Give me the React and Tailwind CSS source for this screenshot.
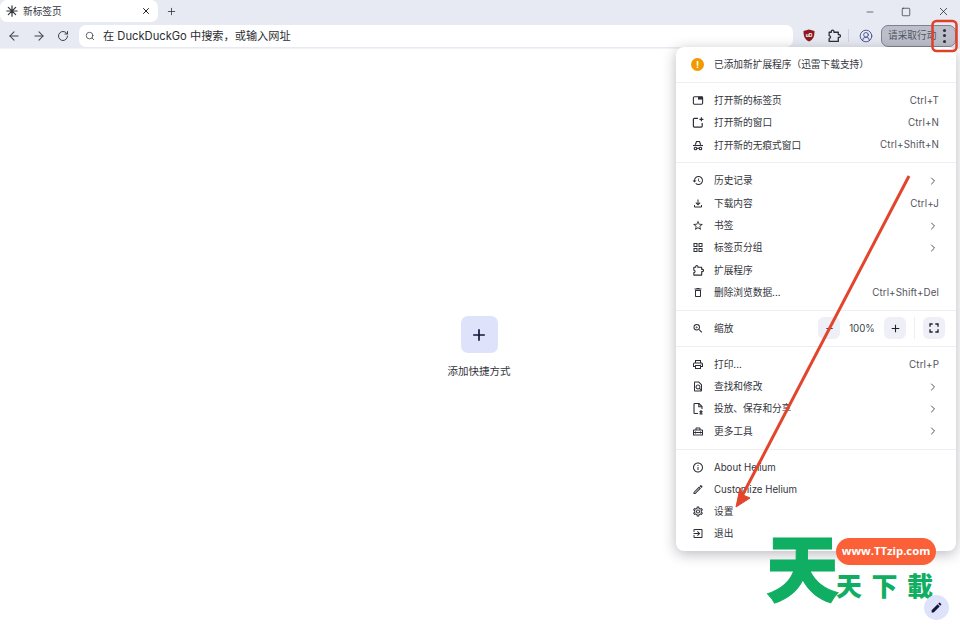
import React from "react";
import { ArrowLeft, ArrowRight, RotateCw, Search, Minus, Square, X, Plus, ChevronRight, CircleUserRound } from "lucide-react";
import {
  MdHistory, MdOutlineFileDownload, MdStarBorder, MdOutlineGridView,
  MdOutlineDelete, MdZoomIn, MdOutlinePrint, MdOutlineFindInPage, MdOutlineHomeRepairService,
  MdInfoOutline, MdOutlineEdit, MdOutlineSettings, MdOutlineExitToApp, MdFullscreen, MdEdit, MdAdd, MdRemove,
} from "react-icons/md";

const font = { fontFamily: 'Inter, "Noto Sans CJK SC", sans-serif' };

function Puzzle({ size = 13 }) {
  return (
    <svg width={size} height={size} viewBox="0 0 13 13" fill="none" stroke="currentColor" strokeWidth="1.200" strokeLinejoin="round">
      <path d="M2 3H4V2.300a1.200 1.200 0 0 1 2.400 0V3H10.500V5.300H11.300a1.200 1.200 0 0 1 0 2.400H10.500V11.500H2V8.800a1.300 1.300 0 0 0 0-2.600z" />
    </svg>
  );
}
function NewTab() {
  return (
    <svg width="13" height="13" viewBox="0 0 13 13" fill="none">
      <rect x="1.500" y="2.500" width="10" height="8" rx="1" stroke="currentColor" strokeWidth="1.200" />
      <rect x="6.500" y="2.500" width="5" height="3" fill="currentColor" />
    </svg>
  );
}
function NewWindow() {
  return (
    <svg width="13" height="13" viewBox="0 0 12 12" fill="none" stroke="currentColor" strokeWidth="1.200">
      <path d="M6 1.800H2.400a1 1 0 0 0-1 1v6.800a1 1 0 0 0 1 1h6.800a1 1 0 0 0 1-1V6.500" />
      <path d="M9.400 .8v4M7.400 2.800h4" />
    </svg>
  );
}
function Incognito() {
  return (
    <svg width="13" height="13" viewBox="0 0 12 12" fill="none" stroke="currentColor" strokeWidth="1.100">
      <path d="M3.300 5.300 4.500 2h3L8.700 5.300" />
      <path d="M1 6h10" />
      <circle cx="3.500" cy="9" r="1.300" />
      <circle cx="8.500" cy="9" r="1.300" />
      <path d="M4.800 8.800h2.400" />
    </svg>
  );
}
function FileShare() {
  return (
    <svg width="13" height="13" viewBox="0 0 12 12" fill="none" stroke="currentColor" strokeWidth="1.100">
      <path d="M6 11H2.800a.8.8 0 0 1-.8-.8V1.800a.8.8 0 0 1 .8-.8H7l3 3v2.500" />
      <path d="M6.800 1v3.200H10" />
      <path d="M9 7.500v2.500M7.500 8.800 9 10.200l1.500-1.400M7.500 11.400h3" />
    </svg>
  );
}
function TabIcon() {
  return (
    <svg width="12" height="12" viewBox="0 0 12 12" stroke="#33353c" strokeWidth="1.200" strokeLinecap="round">
      <path d="M6 .8v10.400M.8 6h10.400M2.300 2.300l7.400 7.400M9.700 2.300l-7.400 7.400" />
    </svg>
  );
}
function Row({ icon, label, right, chevron }) {
  return (
    <div className="flex h-[22.3px] items-center pl-[16px] pr-[17px] text-[9.700px] text-[#33353b]">
      <span className="flex w-[12px] justify-center text-[#2d2f36]">{icon}</span>
      <span className="ml-[10px] flex-1 whitespace-nowrap pt-[1.500px]">{label}</span>
      {right && <span className="whitespace-nowrap pt-[1.500px] text-[9.800px] tracking-[0.1px] text-[#53555d]">{right}</span>}
      {chevron && <ChevronRight size={12} strokeWidth={1.800} className="text-[#3c3f47]" />}
    </div>
  );
}
const Sep = () => <div className="h-px bg-[#eeeef2]" />;
const Group = ({ children }) => <div className="py-[6.3px]">{children}</div>;

export default function App() {
  const ic = 13;
  return (
    <div className="relative flex h-[628px] w-[960px] flex-col overflow-hidden bg-white" style={font}>
      {/* tab strip */}
      <div className="flex h-[23px] items-start bg-[#e8eaf3]">
        <div className="flex h-[22px] w-[158px] items-center rounded-[7px] bg-white pl-[6px] pr-[7px]">
          <TabIcon />
          <span className="ml-[5px] flex-1 pt-[2.500px] text-[9.700px] text-[#33353c]">新标签页</span>
          <X size={10} strokeWidth={2.400} className="text-[#202124]" />
        </div>
        <Plus size={11} strokeWidth={1.800} className="ml-[8px] mt-[6px] text-[#33353c]" />
        <div className="ml-auto mt-[5px] flex items-center text-[#202124]">
          <Minus size={10} strokeWidth={1.500} className="mr-[26px]" />
          <Square size={10} strokeWidth={1.600} className="mr-[26px]" />
          <X size={13} strokeWidth={1.400} className="mr-[10px]" />
        </div>
      </div>
      {/* toolbar */}
      <div className="flex h-[25px] items-center bg-[#e8eaf3] pr-[4px]">
        <ArrowLeft size={14} strokeWidth={1.800} className="ml-[7px] text-[#3c3f47]" />
        <ArrowRight size={14} strokeWidth={1.800} className="ml-[11px] text-[#3c3f47]" />
        <RotateCw size={12} strokeWidth={2} className="ml-[11px] text-[#3c3f47]" />
        <div className="ml-[10px] flex h-[22px] w-[714px] items-center rounded-[7px] bg-white pl-[6px]">
          <Search size={10} strokeWidth={2} className="text-[#44464e]" />
          <span className="ml-[8px] whitespace-nowrap pt-[1px] text-[11.200px] text-[#2b2d33]">在 DuckDuckGo 中搜索，或输入网址</span>
        </div>
        <svg width="12" height="13" viewBox="0 0 12 13" className="ml-[10px]">
          <path d="M6 .5 11.500 2c0 5-1 8.500-5.500 10.500C1.500 10.500.500 7 .500 2z" fill="#8c1b1f" />
          <text x="6" y="7.500" fontSize="5" fill="#fff" textAnchor="middle" fontWeight="700">uD</text>
        </svg>
        <span className="ml-[12px] text-[#2d2f36]"><Puzzle size={14} /></span>
        <div className="ml-[7px] h-[13px] w-px bg-[#cfd1da]" />
        <CircleUserRound size={14} strokeWidth={1.500} className="ml-[10px] text-[#3f4a8a]" />
        <div className="ml-[8px] flex h-[22px] w-[75px] items-center overflow-hidden rounded-[7px] border border-[#80838d] bg-[#bcbfcb] pl-[6px]">
          <span className="whitespace-nowrap pt-[1px] text-[9.700px] text-[#53555e]">请采取行动</span>
          <span className="ml-auto mr-[9px] flex flex-col gap-[2.500px]">
            <i className="block h-[3px] w-[3px] rounded-full bg-[#2d2f36]" />
            <i className="block h-[3px] w-[3px] rounded-full bg-[#2d2f36]" />
            <i className="block h-[3px] w-[3px] rounded-full bg-[#2d2f36]" />
          </span>
        </div>
      </div>
      {/* page */}
      <div className="flex flex-1 flex-col items-center border-t border-[#f1f2f6] pr-[2px] pt-[267px]">
        <div className="flex h-[37px] w-[37px] items-center justify-center rounded-[7px] bg-[#dfe2fb]">
          <MdAdd size={20} className="text-[#12163a]" />
        </div>
        <div className="mt-[11px] text-[10.500px] text-[#33353b]">添加快捷方式</div>
      </div>

      {/* menu */}
      <div className="absolute left-[676px] top-[47px] w-[280px] rounded-[8px] bg-white shadow-[0_3px_14px_rgba(40,40,60,0.32)]">
        <div className="flex h-[35px] items-center pl-[15px] text-[9.700px] text-[#33353b]">
          <span className="flex h-[13px] w-[13px] items-center justify-center rounded-full bg-[#f29900] text-[9.500px] font-bold leading-none text-white">!</span>
          <span className="ml-[10px] pt-[2px]">已添加新扩展程序（迅雷下载支持）</span>
        </div>
        <Sep />
        <Group>
          <Row icon={<NewTab />} label="打开新的标签页" right="Ctrl+T" />
          <Row icon={<NewWindow />} label="打开新的窗口" right="Ctrl+N" />
          <Row icon={<Incognito />} label="打开新的无痕式窗口" right="Ctrl+Shift+N" />
        </Group>
        <Sep />
        <Group>
          <Row icon={<MdHistory size={ic} />} label="历史记录" chevron />
          <Row icon={<MdOutlineFileDownload size={ic} />} label="下载内容" right="Ctrl+J" />
          <Row icon={<MdStarBorder size={ic} />} label="书签" chevron />
          <Row icon={<MdOutlineGridView size={ic} />} label="标签页分组" chevron />
          <Row icon={<Puzzle />} label="扩展程序" />
          <Row icon={<MdOutlineDelete size={ic} />} label="删除浏览数据..." right="Ctrl+Shift+Del" />
        </Group>
        <Sep />
        <div className="flex h-[35px] items-center pl-[16px] pr-[11px] text-[9.700px] text-[#33353b]">
          <span className="flex w-[12px] justify-center text-[#2d2f36]"><MdZoomIn size={ic} /></span>
          <span className="ml-[10px] flex-1 pt-[1.500px]">缩放</span>
          <span className="flex h-[22px] w-[22px] items-center justify-center rounded-[6px] bg-[#eeeff7]"><MdRemove size={11} /></span>
          <span className="w-[44px] pt-[1px] text-center text-[#3c3f47]">100%</span>
          <span className="flex h-[22px] w-[22px] items-center justify-center rounded-[6px] bg-[#eeeff7] text-[#202124]"><MdAdd size={13} /></span>
          <span className="ml-[8px] h-[22px] w-px bg-[#eeeef2]" />
          <span className="ml-[8px] flex h-[22px] w-[22px] items-center justify-center rounded-[6px] bg-[#eeeff7] text-[#202124]"><MdFullscreen size={16} /></span>
        </div>
        <Sep />
        <Group>
          <Row icon={<MdOutlinePrint size={ic} />} label="打印..." right="Ctrl+P" />
          <Row icon={<MdOutlineFindInPage size={ic} />} label="查找和修改" chevron />
          <Row icon={<FileShare />} label="投放、保存和分享" chevron />
          <Row icon={<MdOutlineHomeRepairService size={ic} />} label="更多工具" chevron />
        </Group>
        <Sep />
        <Group>
          <Row icon={<MdInfoOutline size={ic} />} label="About Helium" />
          <Row icon={<MdOutlineEdit size={ic} />} label="Customize Helium" />
          <Row icon={<MdOutlineSettings size={ic} />} label="设置" />
          <Row icon={<MdOutlineExitToApp size={ic} />} label="退出" />
        </Group>
      </div>

      {/* annotation */}
      <svg className="pointer-events-none absolute left-0 top-0" width="960" height="628" fill="none">
        <rect x="932.500" y="21" width="24" height="30" rx="4" stroke="#e0402a" strokeWidth="2.500" />
        <path d="M909 176 741 498" stroke="#e2452c" strokeWidth="3" />
        <path d="M736 507 740 488 743 495 750 498z" fill="#e2452c" stroke="#e2452c" />
      </svg>

      {/* watermark */}
      <div className="absolute left-[766px] top-[522px] h-[80px] w-[72px] text-center text-[73px] font-black leading-[84px] text-[#10ae62] [-webkit-text-stroke:1px_#10ae62]" style={{ fontFamily: '"Noto Sans CJK SC", sans-serif' }}>天</div>
      <div className="absolute left-[836px] top-[538px] flex h-[27px] w-[100px] items-center justify-center rounded-full bg-[#fb6038] text-[11.300px] font-bold text-white" style={{ fontFamily: '"Open Sans", sans-serif' }}>www.TTzip.com</div>
      <div className="absolute left-[836px] top-[568px] whitespace-nowrap text-[26px] font-black leading-[34px] tracking-[9.500px] text-[#10ae62]" style={{ fontFamily: '"Noto Sans CJK SC", sans-serif' }}>天下載</div>
      <div className="absolute left-[924px] top-[595px] flex h-[25px] w-[25px] items-center justify-center rounded-full bg-[#dfe2fb]">
        <MdEdit size={13} className="text-[#12163a]" />
      </div>
    </div>
  );
}
